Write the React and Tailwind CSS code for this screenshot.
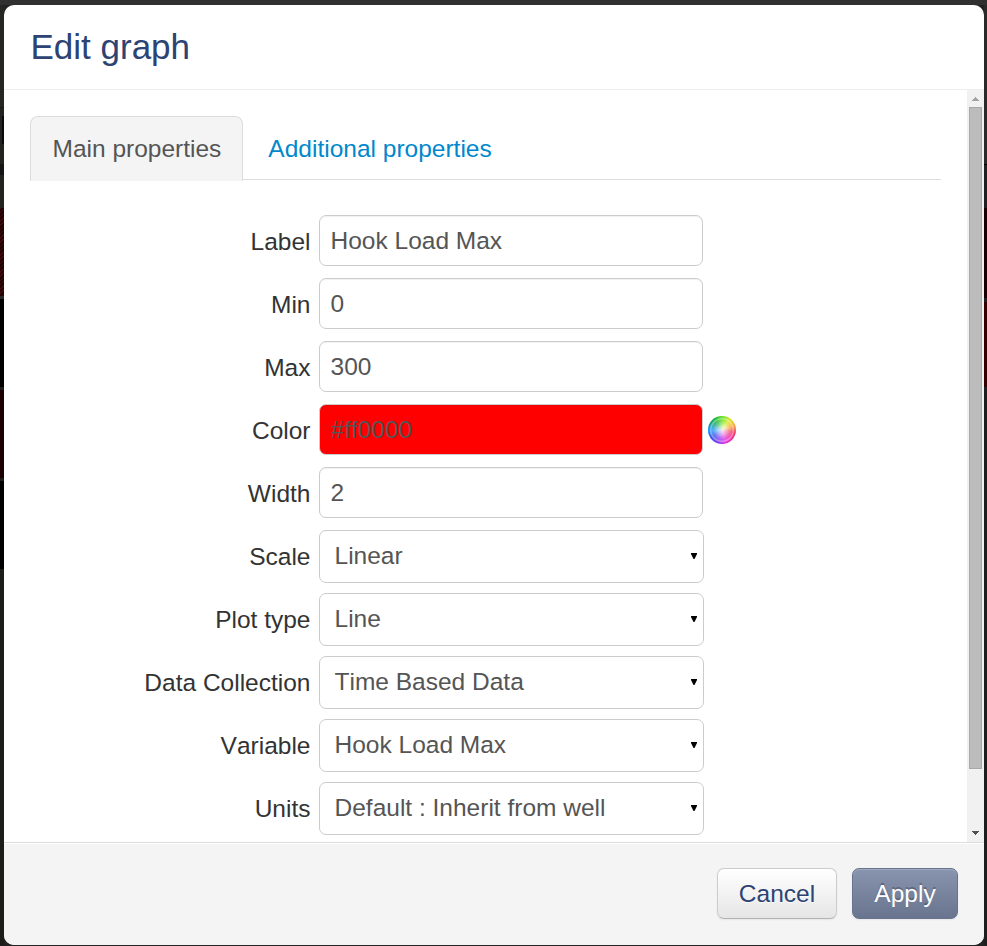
import React, { useState } from 'react';
import clsx from 'clsx';

const textFields = [
  { id: 'label', label: 'Label', value: 'Hook Load Max' },
  { id: 'min', label: 'Min', value: '0' },
  { id: 'max', label: 'Max', value: '300' },
  { id: 'color', label: 'Color', value: '#ff0000', picker: true },
  { id: 'width', label: 'Width', value: '2' },
];

const selectFields = [
  { id: 'scale', label: 'Scale', value: 'Linear' },
  { id: 'plotType', label: 'Plot type', value: 'Line' },
  { id: 'collection', label: 'Data Collection', value: 'Time Based Data' },
  { id: 'variable', label: 'Variable', value: 'Hook Load Max' },
  { id: 'units', label: 'Units', value: 'Default : Inherit from well' },
];

// Dimmed page behind the dialog
const LeftBackdrop = () => (
  <div className="flex w-1 shrink-0 flex-col">
    <div className="h-[102px] bg-[#262522]" />
    <div className="h-px bg-[#1a1917]" />
    <div className="h-[8px] bg-[#23221f]" />
    <div className="ml-[2px] h-[28px] bg-[#0b0a0a]" />
    <div className="h-[20px] bg-[#23221f]" />
    <div className="h-[11px] bg-[#161513]" />
    <div className="h-[33px] bg-[#23221f]" />
    <div className="h-[88px] bg-[repeating-linear-gradient(135deg,#480808_0_1px,#1c0202_1px_3px)]" />
    <div className="h-[3px] bg-[#2a2927]" />
    <div className="h-[88px] bg-black" />
    <div className="h-[3px] bg-[#1f1e1c]" />
    <div className="h-[88px] bg-[#1a0000]" />
    <div className="h-[3px] bg-[#1f1e1c]" />
    <div className="h-[88px] bg-black" />
    <div className="flex-1 bg-[#1d1c19]" />
  </div>
);

const RightBackdrop = () => (
  <div className="flex w-[3px] shrink-0 flex-col">
    <div className="h-[159px] bg-[#2a2a2a]" />
    <div className="h-px bg-black" />
    <div className="h-[43px] bg-[#1f2022]" />
    <div className="h-[90px] bg-[#180000]" />
    <div className="h-[4px] bg-[#1d1d1d]" />
    <div className="h-[85px] bg-[#330000]" />
    <div className="flex-1 bg-[#1e1e1e]" />
  </div>
);

const ColorWheel = () => (
  <button
    type="button"
    aria-label="Pick color"
    className="ml-[5px] h-7 w-7 rounded-full bg-[radial-gradient(circle_closest-side,#ffffffdd_0%,#ffffffaa_25%,#ffffff50_55%,#ffffff30_72%,#ffffff77_80%,#ffffff40_86%,transparent_92%),conic-gradient(#60e020,#d8e818_35deg,#f8a840_70deg,#f04060_100deg,#f02898_130deg,#e030e8_165deg,#8038f0_200deg,#3050e8_235deg,#2090f8_265deg,#1098d0_285deg,#10a070_305deg,#18b830_330deg,#60e020)]"
  />
);

const Row = ({ id, label, children }) => (
  <div className="flex h-[63px] items-start">
    <label htmlFor={id} className="mr-[8.5px] w-[280.5px] pt-[9px] text-right leading-[35px] text-[#333]">
      {label}
    </label>
    {children}
  </div>
);

const Scrollbar = () => (
  <div className="flex w-[17px] shrink-0 flex-col items-center bg-[#f1f1f1]">
    <div className="flex h-[17px] items-center">
      <svg className="h-1 w-[7px]" viewBox="0 0 7 4" fill="#a3a3a3" shapeRendering="crispEdges">
        <path d="M3 0h1v1h1v1h1v1h1v1H0V3h1V2h1V1h1z" />
      </svg>
    </div>
    <div className="h-[662px] w-[13px] border border-[#a8a8a8] bg-[#bcbcbc]" />
    <div className="mt-auto flex h-[19px] items-center">
      <svg className="h-1 w-[7px]" viewBox="0 0 7 4" fill="#505050" shapeRendering="crispEdges">
        <path d="M3 4h1V3h1V2h1V1h1V0H0v1h1v1h1v1h1z" />
      </svg>
    </div>
  </div>
);

const App = () => {
  const [activeTab, setActiveTab] = useState('main');
  const [values, setValues] = useState(
    Object.fromEntries(textFields.map((field) => [field.id, field.value]))
  );

  const tabs = [
    { id: 'main', title: 'Main properties' },
    { id: 'additional', title: 'Additional properties' },
  ];

  return (
    <div className="flex h-[946px] w-[987px] flex-col overflow-hidden bg-[#222] font-['Liberation_Sans',Arial,sans-serif] text-[24.5px] [font-kerning:none]">
      <div className="h-[5px] shrink-0 bg-[#303030]" />
      <div className="flex h-[940px] shrink-0 bg-[#222]">
        <LeftBackdrop />
        <div className="flex w-[980px] flex-col overflow-hidden rounded-[10px] bg-white">
          <header className="h-[85px] shrink-0 border-b border-[#eee] pt-[16px] pl-[26.5px]">
            <h1 className="text-[35px] leading-[52px] text-[#2c4373]">Edit graph</h1>
          </header>

          <div className="flex h-[752px] shrink-0 overflow-hidden">
            <main className="min-w-0 flex-1 pt-[26px] pr-[26px] pl-[26px]">
              <nav className="flex h-16 border-b border-[#ddd]">
                {tabs.map((tab) => (
                  <button
                    key={tab.id}
                    type="button"
                    onClick={() => setActiveTab(tab.id)}
                    className={clsx(
                      'mr-[3px] h-[65px] rounded-t-lg border border-b-0 pr-[20.5px] pl-[21.5px]',
                      activeTab === tab.id
                        ? 'border-[#ddd] bg-[#f4f4f4] text-[#555]'
                        : 'border-transparent text-[#0088cc]'
                    )}
                  >
                    {tab.title}
                  </button>
                ))}
              </nav>

              <form className="pt-[35px]">
                {textFields.map((field) => (
                  <Row key={field.id} id={field.id} label={field.label}>
                    <div className="flex items-center">
                      <input
                        id={field.id}
                        value={values[field.id]}
                        onChange={(e) => setValues({ ...values, [field.id]: e.target.value })}
                        className={clsx(
                          'h-[51px] w-[384px] rounded-[7px] border border-[#ccc] px-[10.5px] text-[#555] shadow-[inset_0_1px_1px_rgba(0,0,0,0.06)] outline-none',
                          field.picker ? 'bg-[#ff0000]' : 'bg-white'
                        )}
                      />
                      {field.picker && <ColorWheel />}
                    </div>
                  </Row>
                ))}
                {selectFields.map((field) => (
                  <Row key={field.id} id={field.id} label={field.label}>
                    <button
                      id={field.id}
                      type="button"
                      className="flex h-[53px] w-[385px] items-center justify-between rounded-[7px] border border-[#ccc] bg-white pr-[6px] pl-[14.5px] text-[#555]"
                    >
                      <span>{field.value}</span>
                      <svg className="mb-[2px] h-[6px] w-[6px]" viewBox="0 0 6 6" fill="#000">
                        <path d="M0 0h6v1L3.5 6h-1L0 1z" />
                      </svg>
                    </button>
                  </Row>
                ))}
              </form>
            </main>
            <Scrollbar />
          </div>

          <footer className="flex flex-1 items-start justify-end gap-[15px] border-t border-[#ddd] bg-[#f4f4f4] pt-[25px] pr-[26px] shadow-[inset_0_1px_0_#fff]">
            <button
              type="button"
              className="h-[51px] w-[120px] rounded-[7px] border border-[#ccc] border-b-[#b3b3b3] bg-linear-to-b from-white to-[#e6e6e6] pt-[2px] text-[#2c4373] shadow-[0_1px_2px_rgba(0,0,0,0.06)] [text-shadow:0_1px_1px_rgba(255,255,255,0.75)]"
            >
              Cancel
            </button>
            <button
              type="button"
              className="h-[51px] w-[106px] rounded-[7px] border border-[#68738f] bg-linear-to-b from-[#8994ae] to-[#69748f] pt-[2px] text-white shadow-[inset_0_1px_0_rgba(255,255,255,0.2),0_1px_2px_rgba(0,0,0,0.06)] [text-shadow:0_-2px_0_rgba(0,0,0,0.25)]"
            >
              Apply
            </button>
          </footer>
        </div>
        <RightBackdrop />
      </div>
    </div>
  );
};

export default App;
